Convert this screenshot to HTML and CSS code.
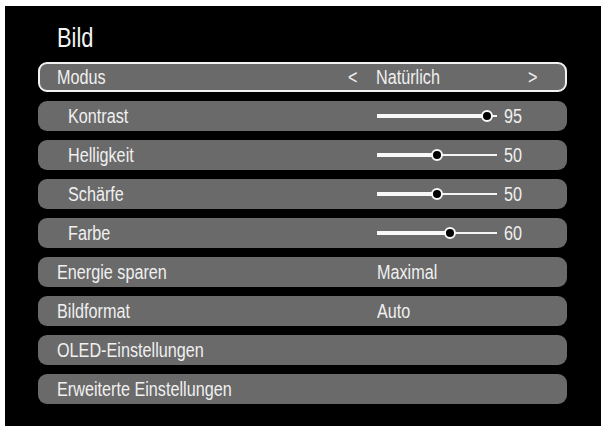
FILE: index.html
```html
<!DOCTYPE html>
<html lang="de">
<head>
<meta charset="utf-8">
<title>Bild</title>
<link rel="stylesheet" href="styles.css">
</head>
<body>
<div class="screen">
  <h1 class="title"><span class="t">Bild</span></h1>
  <ul class="menu">
    <li class="row selected">
      <span class="label label-mode"><span class="t">Modus</span></span>
      <span class="arrow"><span class="t">&lt;</span></span>
      <span class="value"><span class="t">Natürlich</span></span>
      <span class="arrow arrow-right"><span class="t">&gt;</span></span>
    </li>
    <li class="row sub">
      <span class="label"><span class="t">Kontrast</span></span>
      <span class="slider"><span class="fill" style="width:110px"></span><span class="knob" style="left:110px"></span></span>
      <span class="num"><span class="t">95</span></span>
    </li>
    <li class="row sub">
      <span class="label"><span class="t">Helligkeit</span></span>
      <span class="slider"><span class="fill" style="width:60px"></span><span class="knob" style="left:60px"></span></span>
      <span class="num"><span class="t">50</span></span>
    </li>
    <li class="row sub">
      <span class="label"><span class="t">Schärfe</span></span>
      <span class="slider"><span class="fill" style="width:60px"></span><span class="knob" style="left:60px"></span></span>
      <span class="num"><span class="t">50</span></span>
    </li>
    <li class="row sub">
      <span class="label"><span class="t">Farbe</span></span>
      <span class="slider"><span class="fill" style="width:73px"></span><span class="knob" style="left:73px"></span></span>
      <span class="num"><span class="t">60</span></span>
    </li>
    <li class="row">
      <span class="label"><span class="t">Energie sparen</span></span>
      <span class="value"><span class="t">Maximal</span></span>
    </li>
    <li class="row">
      <span class="label"><span class="t">Bildformat</span></span>
      <span class="value"><span class="t">Auto</span></span>
    </li>
    <li class="row">
      <span class="label"><span class="t">OLED-Einstellungen</span></span>
    </li>
    <li class="row">
      <span class="label"><span class="t">Erweiterte Einstellungen</span></span>
    </li>
  </ul>
</div>
</body>
</html>
```

FILE: styles.css
```css
html {
  margin: 0;
  padding: 0;
  background: #000000;
  overflow: hidden;
}

body {
  margin: 0;
  padding: 0;
  min-height: 100vh;
  box-sizing: border-box;
  border-top: 6px solid #ffffff;
  border-left: 5px solid #ffffff;
  background: #000000;
  font-family: "Liberation Sans", Arial, sans-serif;
}

.screen {
  padding: 15px 0 0 33px;
}

.t {
  display: inline-block;
  transform: scaleX(0.81);
  transform-origin: 0 50%;
  white-space: nowrap;
}

.title {
  margin: 0 0 7px 0;
  padding-left: 19px;
  font-size: 28px;
  line-height: 34px;
  font-weight: normal;
  color: #f4f4f4;
}

.title .t {
  transform: scaleX(0.78);
}

.menu {
  list-style: none;
  margin: 0;
  padding: 0;
  width: 529px;
  display: flex;
  flex-direction: column;
  gap: 9px;
}

.row {
  height: 30px;
  box-sizing: border-box;
  background: #6a6a6a;
  border-radius: 9px;
  display: flex;
  align-items: center;
  color: #f0f0f0;
  font-size: 20px;
  line-height: 30px;
}

.row.selected {
  border: 2px solid #f2f2f2;
  line-height: 26px;
}

.label {
  width: 339px;
  flex: none;
  padding-left: 19px;
  box-sizing: border-box;
  white-space: nowrap;
}

.row.selected .label {
  padding-left: 17px;
  width: 308px;
}

.row.sub .label {
  padding-left: 30px;
}

.arrow {
  width: 28px;
  flex: none;
}

.arrow-right {
  width: 12px;
  margin-left: auto;
  margin-right: 25px;
}

.value {
  white-space: nowrap;
}

.slider {
  position: relative;
  width: 120px;
  height: 12px;
  flex: none;
  display: block;
}

.slider::before {
  content: "";
  position: absolute;
  left: 0;
  right: 0;
  top: 5px;
  height: 2px;
  background: #f4f4f4;
}

.fill {
  position: absolute;
  left: 0;
  top: 4px;
  height: 4px;
  background: #f8f8f8;
}

.knob {
  position: absolute;
  top: 0;
  width: 12px;
  height: 12px;
  margin-left: -6px;
  box-sizing: border-box;
  border-radius: 50%;
  border: 2px solid #f8f8f8;
  background: #000000;
}

.num {
  margin-left: 7px;
}
```
